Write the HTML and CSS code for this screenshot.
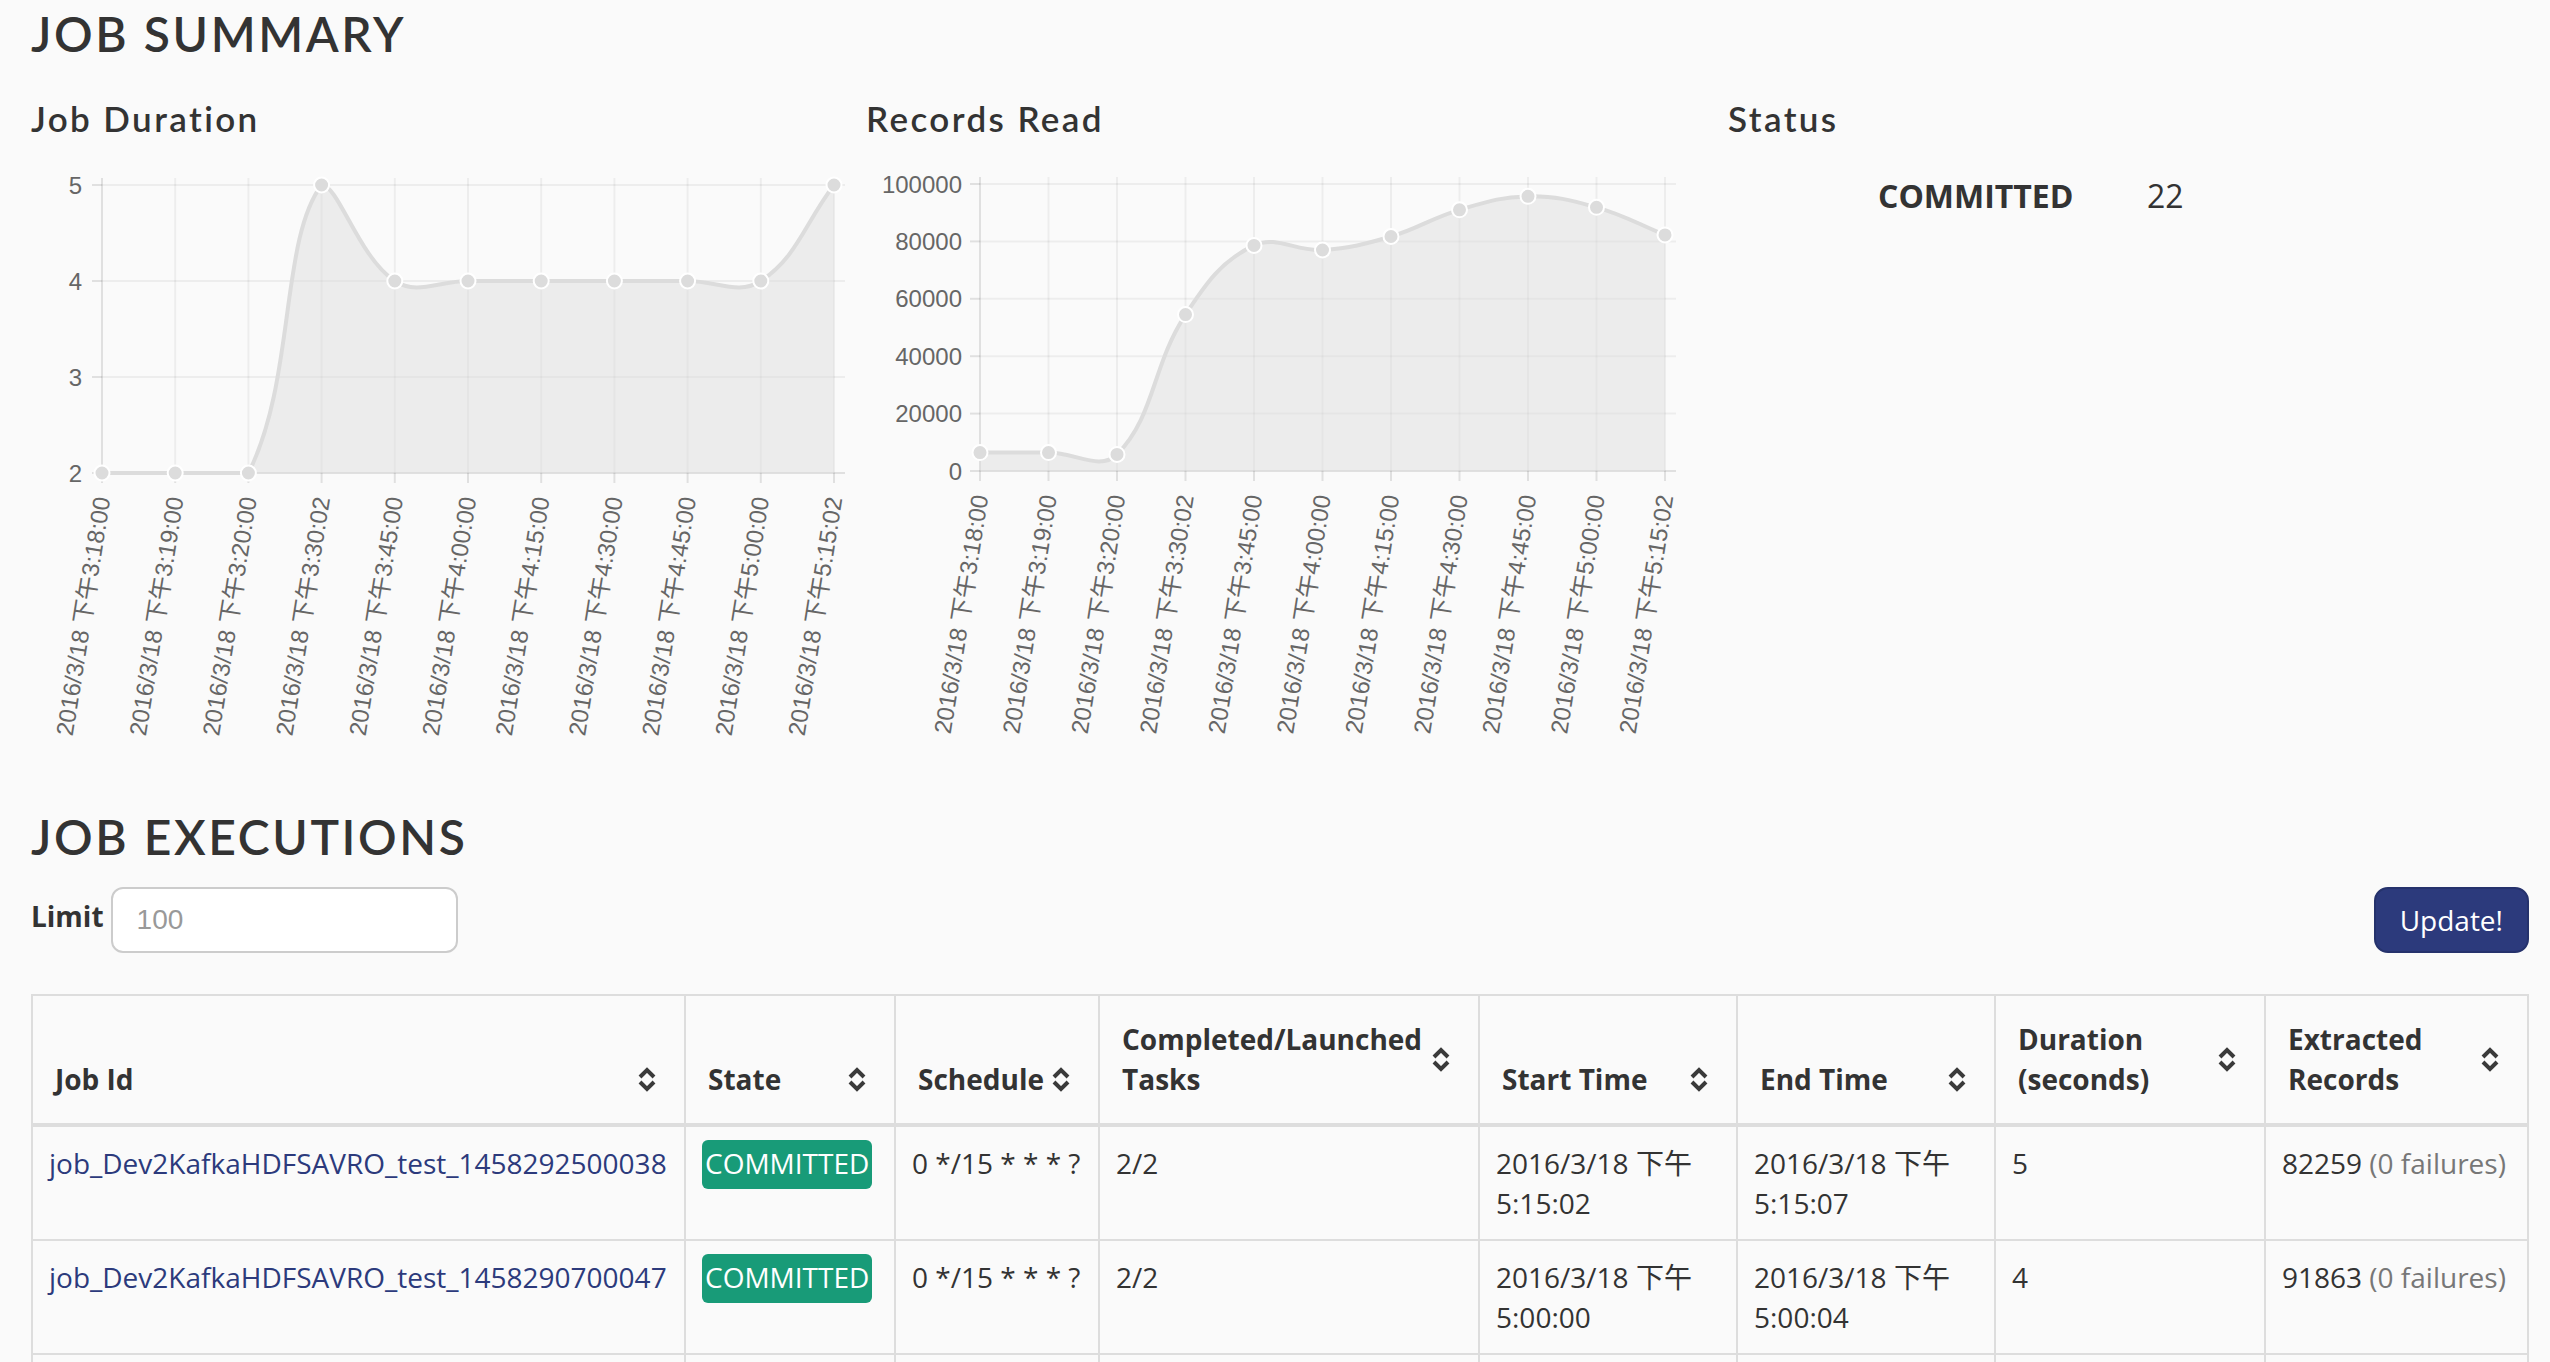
FILE: index.html
```html
<!DOCTYPE html>
<html lang="en">
<head>
<meta charset="utf-8">
<title>Job Summary</title>
<link rel="stylesheet" href="styles.css">
</head>
<body>
<main class="page">
  <h1 class="section-title">JOB SUMMARY</h1>
  <div class="summary">
    <section class="panel">
      <h3 class="panel-title">Job Duration</h3>
      <svg class="chart" id="chart-duration" width="830" height="600" viewBox="0 0 830 600"></svg>
    </section>
    <section class="panel">
      <h3 class="panel-title">Records Read</h3>
      <svg class="chart" id="chart-records" width="830" height="600" viewBox="0 0 830 600"></svg>
    </section>
    <section class="panel">
      <h3 class="panel-title">Status</h3>
      <div class="status-row">
        <span class="status-name">COMMITTED</span>
        <span class="status-count">22</span>
      </div>
    </section>
  </div>

  <h1 class="section-title executions-title">JOB EXECUTIONS</h1>
  <div class="toolbar">
    <label class="limit-label" for="limit">Limit</label>
    <input id="limit" class="limit-input" type="text" placeholder="100">
    <button class="btn-update" type="button">Update!</button>
  </div>

  <table class="jobs">
    <thead>
      <tr>
        <th class="c1"><div class="th-inner"><span>Job Id</span><svg class="sort" viewBox="0 0 18 27"><path d="M2 11 L9 4 L16 11 M2 16 L9 23 L16 16"/></svg></div></th>
        <th class="c2"><div class="th-inner"><span>State</span><svg class="sort" viewBox="0 0 18 27"><path d="M2 11 L9 4 L16 11 M2 16 L9 23 L16 16"/></svg></div></th>
        <th class="c3"><div class="th-inner"><span>Schedule</span><svg class="sort" viewBox="0 0 18 27"><path d="M2 11 L9 4 L16 11 M2 16 L9 23 L16 16"/></svg></div></th>
        <th class="c4"><div class="th-inner"><span>Completed/Launched Tasks</span><svg class="sort" viewBox="0 0 18 27"><path d="M2 11 L9 4 L16 11 M2 16 L9 23 L16 16"/></svg></div></th>
        <th class="c5"><div class="th-inner"><span>Start Time</span><svg class="sort" viewBox="0 0 18 27"><path d="M2 11 L9 4 L16 11 M2 16 L9 23 L16 16"/></svg></div></th>
        <th class="c6"><div class="th-inner"><span>End Time</span><svg class="sort" viewBox="0 0 18 27"><path d="M2 11 L9 4 L16 11 M2 16 L9 23 L16 16"/></svg></div></th>
        <th class="c7"><div class="th-inner"><span>Duration (seconds)</span><svg class="sort" viewBox="0 0 18 27"><path d="M2 11 L9 4 L16 11 M2 16 L9 23 L16 16"/></svg></div></th>
        <th class="c8"><div class="th-inner"><span>Extracted Records</span><svg class="sort" viewBox="0 0 18 27"><path d="M2 11 L9 4 L16 11 M2 16 L9 23 L16 16"/></svg></div></th>
      </tr>
    </thead>
    <tbody>
      <tr>
        <td><a class="job-link" href="#">job_Dev2KafkaHDFSAVRO_test_1458292500038</a></td>
        <td><span class="badge">COMMITTED</span></td>
        <td>0 */15 * * * ?</td>
        <td>2/2</td>
        <td>2016/3/18 下午<wbr>5:15:02</td>
        <td>2016/3/18 下午<wbr>5:15:07</td>
        <td>5</td>
        <td>82259 <span class="muted">(0 failures)</span></td>
      </tr>
      <tr>
        <td><a class="job-link" href="#">job_Dev2KafkaHDFSAVRO_test_1458290700047</a></td>
        <td><span class="badge">COMMITTED</span></td>
        <td>0 */15 * * * ?</td>
        <td>2/2</td>
        <td>2016/3/18 下午<wbr>5:00:00</td>
        <td>2016/3/18 下午<wbr>5:00:04</td>
        <td>4</td>
        <td>91863 <span class="muted">(0 failures)</span></td>
      </tr>
      <tr>
        <td><a class="job-link" href="#">job_Dev2KafkaHDFSAVRO_test_1458289800045</a></td>
        <td><span class="badge">COMMITTED</span></td>
        <td>0 */15 * * * ?</td>
        <td>2/2</td>
        <td>2016/3/18 下午<wbr>4:45:00</td>
        <td>2016/3/18 下午<wbr>4:45:04</td>
        <td>4</td>
        <td>95712 <span class="muted">(0 failures)</span></td>
      </tr>
    </tbody>
  </table>
</main>
<script src="script.js"></script>
</body>
</html>
```

FILE: styles.css
```css
* { box-sizing: border-box; }

html, body {
  margin: 0;
  padding: 0;
  background: #fafafa;
}

body {
  font-family: "Open Sans", "Noto Sans CJK TC", sans-serif;
  font-size: 28px;
  line-height: 40px;
  color: #333;
}

.page {
  padding: 0 21px 0 31px;
}

.section-title {
  margin: 0;
  font-family: Lato, "Noto Sans", sans-serif;
  font-weight: 600;
  font-size: 48px;
  line-height: 68px;
  letter-spacing: 2.6px;
  color: #333;
}

.executions-title {
  margin-top: 43px;
}

.summary {
  display: grid;
  grid-template-columns: 835px 862px 1fr;
  padding-top: 28px;
}

.panel-title {
  margin: 0 0 20px 0;
  font-family: Lato, "Noto Sans", sans-serif;
  font-weight: 600;
  font-size: 35px;
  line-height: 44px;
  letter-spacing: 2.4px;
  color: #333;
}

.chart {
  display: block;
  overflow: visible;
}

.chart .grid { stroke: rgba(0, 0, 0, 0.05); stroke-width: 2; }
.chart .axis { stroke: rgba(0, 0, 0, 0.1); stroke-width: 2; }
.chart .ylab,
.chart .xlab {
  font-family: "Liberation Sans", "Noto Sans CJK SC", sans-serif;
  font-size: 24px;
  fill: #666;
  text-anchor: end;
  dominant-baseline: central;
}
.chart .area { fill: rgba(220, 220, 220, 0.45); stroke: none; }
.chart .line { fill: none; stroke: #dcdcdc; stroke-width: 4; }
.chart .dot { fill: #dcdcdc; stroke: #fff; stroke-width: 2; }

.status-row {
  display: flex;
  margin: 34px 0 0 150px;
  font-size: 32px;
  line-height: 44px;
}

.status-name {
  width: 269px;
  font-weight: 700;
}

.toolbar {
  display: flex;
  align-items: center;
  height: 66px;
  margin-top: 16px;
}

.limit-label {
  font-weight: 700;
  margin-right: 7px;
  padding-bottom: 8px;
}

.limit-input {
  width: 347px;
  height: 66px;
  padding: 0 24px;
  border: 2px solid #ccc;
  border-radius: 12px;
  background: #fff;
  font-family: "Liberation Sans", sans-serif;
  font-size: 28px;
  color: #333;
  outline: none;
}

.limit-input::placeholder { color: #999; }

.btn-update {
  margin-left: auto;
  height: 66px;
  padding: 0 24px;
  border: 2px solid #25326c;
  border-radius: 14px;
  background: #2c3a7c;
  color: #fff;
  font-family: "Open Sans", sans-serif;
  font-size: 28px;
  line-height: 40px;
}

.jobs {
  margin-top: 41px;
  width: 2498px;
  table-layout: fixed;
  border-collapse: separate;
  border-spacing: 0;
  border-top: 2px solid #ddd;
  border-left: 2px solid #ddd;
}

.jobs th,
.jobs td {
  border-right: 2px solid #ddd;
  border-bottom: 2px solid #ddd;
  text-align: left;
}

.jobs th {
  padding: 23px 28px 24px 22px;
  border-bottom-width: 4px;
  vertical-align: bottom;
  font-weight: 700;
}

.jobs td {
  padding: 16px;
  vertical-align: top;
}

.c1 { width: 653px; }
.c2 { width: 210px; }
.c3 { width: 204px; }
.c4 { width: 380px; }
.c5 { width: 258px; }
.c6 { width: 258px; }
.c7 { width: 270px; }
.c8 { width: 263px; }

.th-inner {
  display: flex;
  align-items: center;
  justify-content: space-between;
  gap: 4px;
}

.sort {
  flex-shrink: 0;
  width: 18px;
  height: 27px;
}

.sort path {
  fill: none;
  stroke: #3a3a3a;
  stroke-width: 4;
  stroke-linejoin: miter;
}

.job-link {
  color: #2c3a7c;
  text-decoration: none;
}

.badge {
  display: inline;
  padding: 4px 3px 7px;
  border-radius: 6px;
  background: #189b78;
  color: #fff;
}

.muted { color: #777; }
```

FILE: script.js
```js
(function () {
  var NS = 'http://www.w3.org/2000/svg';
  var times = ['3:18:00', '3:19:00', '3:20:00', '3:30:02', '3:45:00', '4:00:00',
               '4:15:00', '4:30:00', '4:45:00', '5:00:00', '5:15:02'];
  var labels = times.map(function (t) { return '2016/3/18 下午' + t; });

  function el(name, attrs, parent, text) {
    var e = document.createElementNS(NS, name);
    for (var k in attrs) e.setAttribute(k, attrs[k]);
    if (text != null) e.textContent = text;
    parent.appendChild(e);
    return e;
  }

  function spline(p0, p1, p2, t) {
    var d01 = Math.hypot(p1.x - p0.x, p1.y - p0.y);
    var d12 = Math.hypot(p2.x - p1.x, p2.y - p1.y);
    var sum = d01 + d12 || 1;
    var fa = t * d01 / sum, fb = t * d12 / sum;
    return {
      inner: { x: p1.x - fa * (p2.x - p0.x), y: p1.y - fa * (p2.y - p0.y) },
      outer: { x: p1.x + fb * (p2.x - p0.x), y: p1.y + fb * (p2.y - p0.y) }
    };
  }

  function draw(svg, c) {
    var span = c.yBottom - c.yTop;
    function yOf(v) { return c.yBottom - (v - c.min) / (c.max - c.min) * span; }
    function clampY(y) { return Math.max(c.yTop, Math.min(c.yBottom, y)); }

    c.ticks.forEach(function (v, i) {
      var y = yOf(v);
      el('line', { x1: c.gridLeft, x2: c.x0, y1: y, y2: y, 'class': 'axis' }, svg);
      el('line', { x1: c.x0, x2: c.gridRight, y1: y, y2: y, 'class': i === 0 ? 'axis' : 'grid' }, svg);
      el('text', { x: c.yLabelRight, y: y, 'class': 'ylab' }, svg, String(v));
    });

    var pts = c.values.map(function (v, i) { return { x: c.x0 + i * c.dx, y: yOf(v) }; });

    pts.forEach(function (p, i) {
      el('line', { x1: p.x, x2: p.x, y1: c.gridTop, y2: c.yBottom, 'class': i === 0 ? 'axis' : 'grid' }, svg);
      el('line', { x1: p.x, x2: p.x, y1: c.yBottom, y2: c.gridBottom, 'class': 'axis' }, svg);
      el('text', { 'class': 'xlab', transform: 'translate(' + p.x + ',' + c.labelY + ') rotate(-81)' }, svg, labels[i]);
    });

    var cps = pts.map(function (p, i) {
      var prev = pts[Math.max(0, i - 1)], next = pts[Math.min(pts.length - 1, i + 1)];
      var cp = spline(prev, p, next, 0.4);
      cp.inner.y = clampY(cp.inner.y);
      cp.outer.y = clampY(cp.outer.y);
      return cp;
    });

    var d = 'M' + pts[0].x + ' ' + pts[0].y;
    for (var i = 1; i < pts.length; i++) {
      var a = cps[i - 1].outer, b = cps[i].inner, p = pts[i];
      d += ' C' + a.x + ' ' + a.y + ' ' + b.x + ' ' + b.y + ' ' + p.x + ' ' + p.y;
    }
    var last = pts[pts.length - 1];
    el('path', { d: d + ' L' + last.x + ' ' + c.yBottom + ' L' + pts[0].x + ' ' + c.yBottom + ' Z', 'class': 'area' }, svg);
    el('path', { d: d, 'class': 'line' }, svg);
    pts.forEach(function (p) { el('circle', { cx: p.x, cy: p.y, r: 7.5, 'class': 'dot' }, svg); });
  }

  draw(document.getElementById('chart-duration'), {
    x0: 71, dx: 73.2, yTop: 25, yBottom: 313, min: 2, max: 5,
    ticks: [2, 3, 4, 5],
    values: [2, 2, 2, 5, 4, 4, 4, 4, 4, 4, 5],
    gridLeft: 61, gridRight: 814, gridTop: 18, gridBottom: 323,
    yLabelRight: 51, labelY: 337
  });

  draw(document.getElementById('chart-records'), {
    x0: 114, dx: 68.5, yTop: 24, yBottom: 311, min: 0, max: 100000,
    ticks: [0, 20000, 40000, 60000, 80000, 100000],
    values: [6427, 6427, 5760, 54500, 78600, 77000, 81700, 91000, 95700, 91863, 82259],
    gridLeft: 104, gridRight: 810, gridTop: 17, gridBottom: 321,
    yLabelRight: 96, labelY: 335
  });
})();
```
